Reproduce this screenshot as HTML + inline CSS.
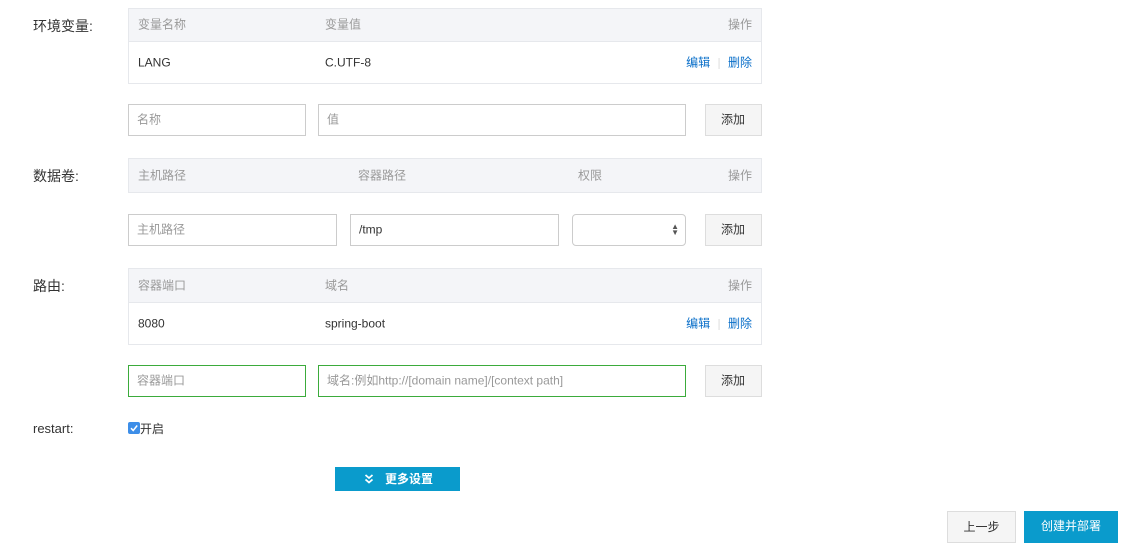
<!DOCTYPE html><html><head><meta charset="utf-8"><style>
body{margin:0;width:1132px;height:541px;background:#fff;position:relative;overflow:hidden;font-family:"Liberation Sans","Noto Sans CJK SC",sans-serif;}
.a{position:absolute;box-sizing:border-box;}
.lbl{font-size:14px;color:#333;left:33px;}
.th{background:#f4f5f8;border:1px solid #e6e8ec;font-size:12px;color:#999;}
.tr{border:1px solid #e6e8ec;border-top:none;font-size:12px;color:#333;}
.t{position:absolute;top:50%;transform:translateY(-55%);white-space:nowrap;}
.in{border:1px solid #ccc;font-size:12px;color:#999;}
.in.g{border-color:#3bab3b;}
.btn{background:#f5f5f5;border:1px solid #ddd;font-size:12px;color:#333;text-align:center;}
.lk{color:#0a6fc9;}
</style></head><body>
<div class="a lbl" style="top:16px">环境变量:</div>
<div class="a th" style="left:128px;top:8px;width:634px;height:34px"><span class="t" style="left:9px">变量名称</span><span class="t" style="left:196px">变量值</span><span class="t" style="right:9px">操作</span></div>
<div class="a tr" style="left:128px;top:42px;width:634px;height:42px"><span class="t" style="left:9px">LANG</span><span class="t" style="left:196px">C.UTF-8</span><span class="t" style="right:9px"><span class="lk">编辑</span> <span style="color:#ddd;margin:0 4px">|</span> <span class="lk">删除</span></span></div>
<div class="a in" style="left:128px;top:104px;width:178px;height:32px"><span class="t" style="left:8px">名称</span></div>
<div class="a in" style="left:318px;top:104px;width:368px;height:32px"><span class="t" style="left:8px">值</span></div>
<div class="a btn" style="left:705px;top:104px;width:57px;height:32px"><span class="t" style="left:15px">添加</span></div>

<div class="a lbl" style="top:166px">数据卷:</div>
<div class="a th" style="left:128px;top:158px;width:634px;height:35px"><span class="t" style="left:9px">主机路径</span><span class="t" style="left:229px">容器路径</span><span class="t" style="left:449px">权限</span><span class="t" style="right:9px">操作</span></div>
<div class="a in" style="left:128px;top:214px;width:209px;height:32px"><span class="t" style="left:8px">主机路径</span></div>
<div class="a in" style="left:350px;top:214px;width:209px;height:32px;color:#333"><span class="t" style="left:8px">/tmp</span></div>
<div class="a in" style="left:572px;top:214px;width:114px;height:32px;border-radius:4px"><span class="t" style="right:6px;font-size:8px;color:#555;line-height:6px;transform:translateY(-50%)">▲<br>▼</span></div>
<div class="a btn" style="left:705px;top:214px;width:57px;height:32px"><span class="t" style="left:15px">添加</span></div>

<div class="a lbl" style="top:276px">路由:</div>
<div class="a th" style="left:128px;top:268px;width:634px;height:35px"><span class="t" style="left:9px">容器端口</span><span class="t" style="left:196px">域名</span><span class="t" style="right:9px">操作</span></div>
<div class="a tr" style="left:128px;top:303px;width:634px;height:42px"><span class="t" style="left:9px">8080</span><span class="t" style="left:196px">spring-boot</span><span class="t" style="right:9px"><span class="lk">编辑</span> <span style="color:#ddd;margin:0 4px">|</span> <span class="lk">删除</span></span></div>
<div class="a in g" style="left:128px;top:365px;width:178px;height:32px"><span class="t" style="left:8px">容器端口</span></div>
<div class="a in g" style="left:318px;top:365px;width:368px;height:32px"><span class="t" style="left:8px">域名:例如http://[domain name]/[context path]</span></div>
<div class="a btn" style="left:705px;top:365px;width:57px;height:32px"><span class="t" style="left:15px">添加</span></div>

<div class="a" style="left:33px;top:421px;font-size:13px;color:#333">restart:</div>
<div class="a" style="left:128px;top:422px;width:12px;height:12px;background:#3d8ee8;border-radius:2px;"><svg width="12" height="12" viewBox="0 0 12 12" style="position:absolute;left:0;top:0"><path d="M3 6.2 L5.2 8.5 L9.2 3.5" fill="none" stroke="#fff" stroke-width="1.5"/></svg></div>
<div class="a" style="left:140px;top:420px;font-size:12px;color:#333">开启</div>

<div class="a" style="left:335px;top:467px;width:125px;height:24px;background:#0a9bcc;color:#fff;font-size:12px;font-weight:bold;line-height:24px"><svg width="10" height="10" viewBox="0 0 10 10" style="position:absolute;left:29px;top:7px"><path d="M1.5 1 L5 4 L8.5 1 M1.5 5.5 L5 8.5 L8.5 5.5" fill="none" stroke="#fff" stroke-width="1.8"/></svg><span style="position:absolute;left:50px">更多设置</span></div>

<div class="a btn" style="left:947px;top:511px;width:69px;height:32px;line-height:30px">上一步</div>
<div class="a" style="left:1024px;top:511px;width:94px;height:32px;background:#0a9bcc;color:#fff;font-size:12px;text-align:center;line-height:30px">创建并部署</div>
</body></html>
